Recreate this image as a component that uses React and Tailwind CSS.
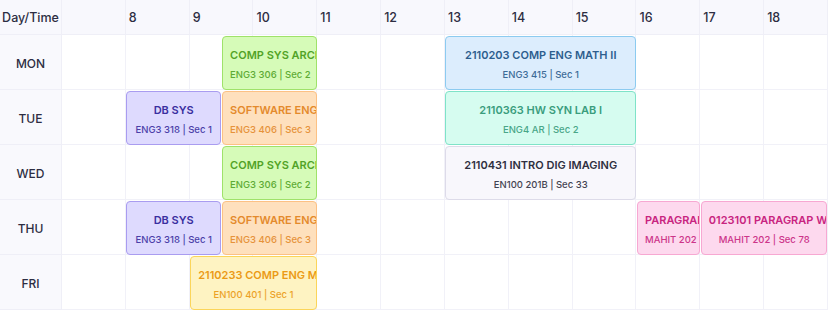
const hours = [7, 8, 9, 10, 11, 12, 13, 14, 15, 16, 17, 18];
const days = ['MON', 'TUE', 'WED', 'THU', 'FRI'];

const colors = {
    green: 'bg-[#d6fbb8] border-[#9fe26a] text-[#52a327]',
    blue: 'bg-[#dcedfd] border-[#8ccbf0] text-[#2d5e8e]',
    purple: 'bg-[#dedafe] border-[#a99cf0] text-[#3a2fa0]',
    orange: 'bg-[#fee0bd] border-[#fcc184] text-[#e48a2c]',
    teal: 'bg-[#d6fcf0] border-[#7fe3c8] text-[#3a9d7d]',
    gray: 'bg-[#f8f7fc] border-[#dddbe9] text-[#2f2f40]',
    yellow: 'bg-[#fef3c2] border-[#fbd55a] text-[#eb9a15]',
    pink: 'bg-[#fdd9ee] border-[#f7a8d2] text-[#c8247f]',
};

// pos: row-start (day) + col-start/col-span in half-hour columns
const events = [
    { pos: 'row-start-2 col-start-7 col-span-3', color: 'green', title: 'COMP SYS ARCH', sub: 'ENG3 306 | Sec 2' },
    { pos: 'row-start-2 col-start-14 col-span-6', color: 'blue', title: '2110203 COMP ENG MATH II', sub: 'ENG3 415 | Sec 1' },
    { pos: 'row-start-3 col-start-4 col-span-3', color: 'purple', title: 'DB SYS', sub: 'ENG3 318 | Sec 1' },
    { pos: 'row-start-3 col-start-7 col-span-3', color: 'orange', title: 'SOFTWARE ENGINEERING', sub: 'ENG3 406 | Sec 3' },
    { pos: 'row-start-3 col-start-14 col-span-6', color: 'teal', title: '2110363 HW SYN LAB I', sub: 'ENG4 AR | Sec 2' },
    { pos: 'row-start-4 col-start-7 col-span-3', color: 'green', title: 'COMP SYS ARCH', sub: 'ENG3 306 | Sec 2' },
    { pos: 'row-start-4 col-start-14 col-span-6', color: 'gray', title: '2110431 INTRO DIG IMAGING', sub: 'EN100 201B | Sec 33' },
    { pos: 'row-start-5 col-start-4 col-span-3', color: 'purple', title: 'DB SYS', sub: 'ENG3 318 | Sec 1' },
    { pos: 'row-start-5 col-start-7 col-span-3', color: 'orange', title: 'SOFTWARE ENGINEERING', sub: 'ENG3 406 | Sec 3' },
    { pos: 'row-start-5 col-start-20 col-span-2', color: 'pink', title: 'PARAGRAP WRITING', sub: 'MAHIT 202 | Sec 78' },
    { pos: 'row-start-5 col-start-22 col-span-4', color: 'pink', title: '0123101 PARAGRAP WRITING', sub: 'MAHIT 202 | Sec 78' },
    { pos: 'row-start-6 col-start-6 col-span-4', color: 'yellow', title: '2110233 COMP ENG MATH I', sub: 'EN100 401 | Sec 1' },
];

const hourCols = [
    'col-start-2', 'col-start-4', 'col-start-6', 'col-start-8', 'col-start-10', 'col-start-12',
    'col-start-14', 'col-start-16', 'col-start-18', 'col-start-20', 'col-start-22', 'col-start-24',
];
const dayRows = ['row-start-2', 'row-start-3', 'row-start-4', 'row-start-5', 'row-start-6'];

export default function App() {
    return (
        <div className="h-[311px] w-[828px] overflow-hidden bg-white font-['Inter',sans-serif] text-[#2d2d42]">
            <div className="grid grid-cols-[62px_repeat(24,minmax(0,1fr))] grid-rows-[35px_repeat(5,55px)]">
                <div className="col-start-1 row-start-1 flex items-center justify-center border-b border-r border-[#efeff7] bg-[#f8f8fd] pt-[2px] text-[12.5px] font-medium">
                    Day/Time
                </div>
                {hours.map((h, i) => (
                    <div key={h} className={`${hourCols[i]} col-span-2 row-start-1 flex items-center border-b border-r border-[#efeff7] bg-[#f8f8fd] pl-[3px] pt-[3px] text-[12.5px] font-medium`}>
                        {h === 7 ? '' : h}
                    </div>
                ))}
                {days.map((d, r) => (
                    <div key={d} className={`${dayRows[r]} col-start-1 flex items-center justify-center border-b border-r border-[#efeff7] bg-[#f9f9fd] pt-[3px] text-[12px] font-medium`}>
                        {d}
                    </div>
                ))}
                {days.map((d, r) =>
                    hours.map((h, i) => (
                        <div key={d + h} className={`${dayRows[r]} ${hourCols[i]} col-span-2 border-b border-r border-[#f1f1f8]`} />
                    ))
                )}
                {events.map((ev, i) => (
                    <div key={i} className={`${ev.pos} m-[0.5px] flex min-w-0 flex-col items-stretch justify-center gap-[5px] overflow-hidden rounded-[4px] border px-[7px] pt-[4px] text-center ${colors[ev.color]}`}>
                        <div className="whitespace-nowrap text-[11px] leading-[15px] font-semibold">{ev.title}</div>
                        <div className="whitespace-nowrap text-[9.5px] leading-[13px] font-medium opacity-90">{ev.sub}</div>
                    </div>
                ))}
            </div>
        </div>
    );
}
